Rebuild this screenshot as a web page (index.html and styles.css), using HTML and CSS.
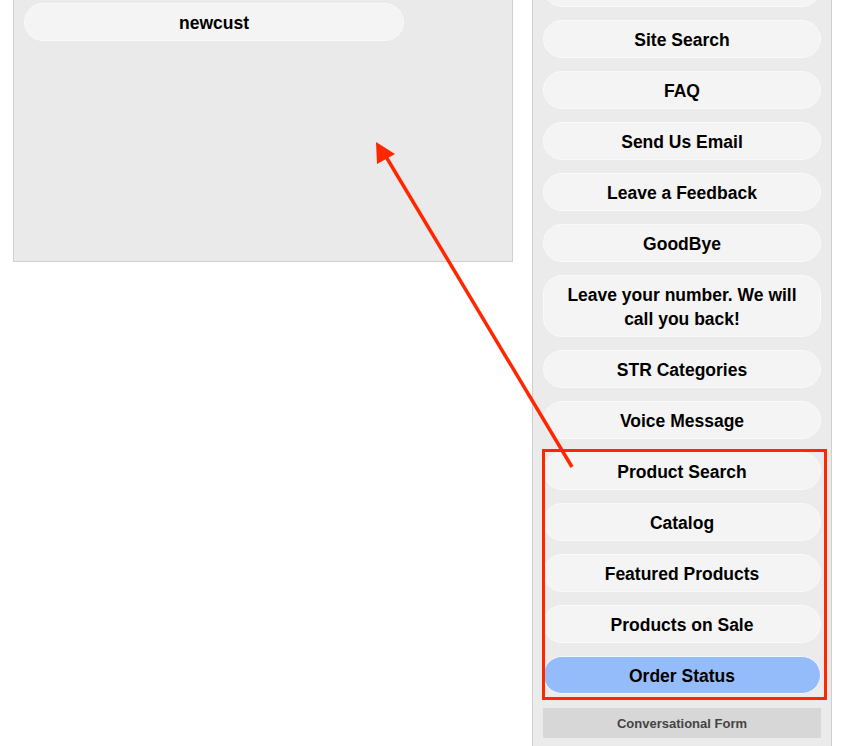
FILE: index.html
```html
<!DOCTYPE html>
<html lang="en">

<head>
	<meta charset="UTF-8">
	<title>Chat Menu</title>
	<link rel="stylesheet" href="styles.css">
</head>

<body>
	<div class="page">
		<section class="chat">
			<button class="pill pill-wide">newcust</button>
		</section>
		<aside class="menu">
			<button class="pill">&nbsp;</button>
			<button class="pill">Site Search</button>
			<button class="pill">FAQ</button>
			<button class="pill">Send Us Email</button>
			<button class="pill">Leave a Feedback</button>
			<button class="pill">GoodBye</button>
			<button class="pill">Leave your number. We will call you back!</button>
			<button class="pill">STR Categories</button>
			<button class="pill">Voice Message</button>
			<button class="pill">Product Search</button>
			<button class="pill">Catalog</button>
			<button class="pill">Featured Products</button>
			<button class="pill">Products on Sale</button>
			<button class="pill pill-active">Order Status</button>
			<div class="form-bar">Conversational Form</div>
		</aside>
	</div>

	<!-- annotation overlay -->
	<div class="highlight"></div>
	<svg class="arrow" width="842" height="746" viewBox="0 0 842 746">
		<line x1="572" y1="467" x2="385" y2="155" stroke="#ff2600" stroke-width="3.5" />
		<polygon points="376,142 395,154 377,164" fill="#ff2600" />
	</svg>
</body>

</html>
```

FILE: styles.css
```css
*:root {
	--panel: #eaeaea;
	--panel-border: #cfcfcf;
	--pill: #f4f4f4;
	--pill-border: #fafafa;
	--active: #95bcfa;
	--mark: #ff2600;
}

* {
	padding: 0;
	margin: 0;
	box-sizing: border-box;
}

html,
body {
	height: 100%;
	overflow: hidden;
	background: white;
}

body {
	font-family: "Liberation Sans", Arial, sans-serif;
	position: relative;
}

.page {
	display: flex;
	flex-flow: row nowrap;
	align-items: flex-start;
	padding-left: 13px;
	gap: 19px;
}

.chat {
	flex: 0 0 500px;
	height: 270px;
	margin-top: -8px;
	padding: 10px;
	background-color: var(--panel);
	border: 1px solid var(--panel-border);
	display: flex;
	flex-flow: column nowrap;
	align-items: flex-start;
}

.menu {
	flex: 0 0 300px;
	margin-top: -42px;
	padding: 10px 10px 20px 10px;
	background-color: #ebebeb;
	border: 1px solid var(--panel-border);
	display: flex;
	flex-flow: column nowrap;
	gap: 13px;
}

.pill {
	display: block;
	width: 100%;
	padding: 7px 12px 5px 12px;
	font-family: inherit;
	font-size: 17.5px;
	font-weight: bold;
	line-height: 24px;
	color: black;
	text-align: center;
	background-color: var(--pill);
	border: 1px solid var(--pill-border);
	border-radius: 19px;
}

.pill-wide {
	width: 380px;
}

.pill-active {
	background-color: var(--active);
	border-color: #f2f6ff;
}

.form-bar {
	height: 30px;
	margin-top: 1px;
	display: flex;
	align-items: center;
	justify-content: center;
	background-color: #d7d7d7;
	color: #444;
	font-size: 13px;
	font-weight: bold;
}

.highlight {
	position: absolute;
	left: 542px;
	top: 449px;
	width: 285px;
	height: 251px;
	border: 3px solid var(--mark);
	pointer-events: none;
}

.arrow {
	position: absolute;
	left: 0;
	top: 0;
	pointer-events: none;
}
```
